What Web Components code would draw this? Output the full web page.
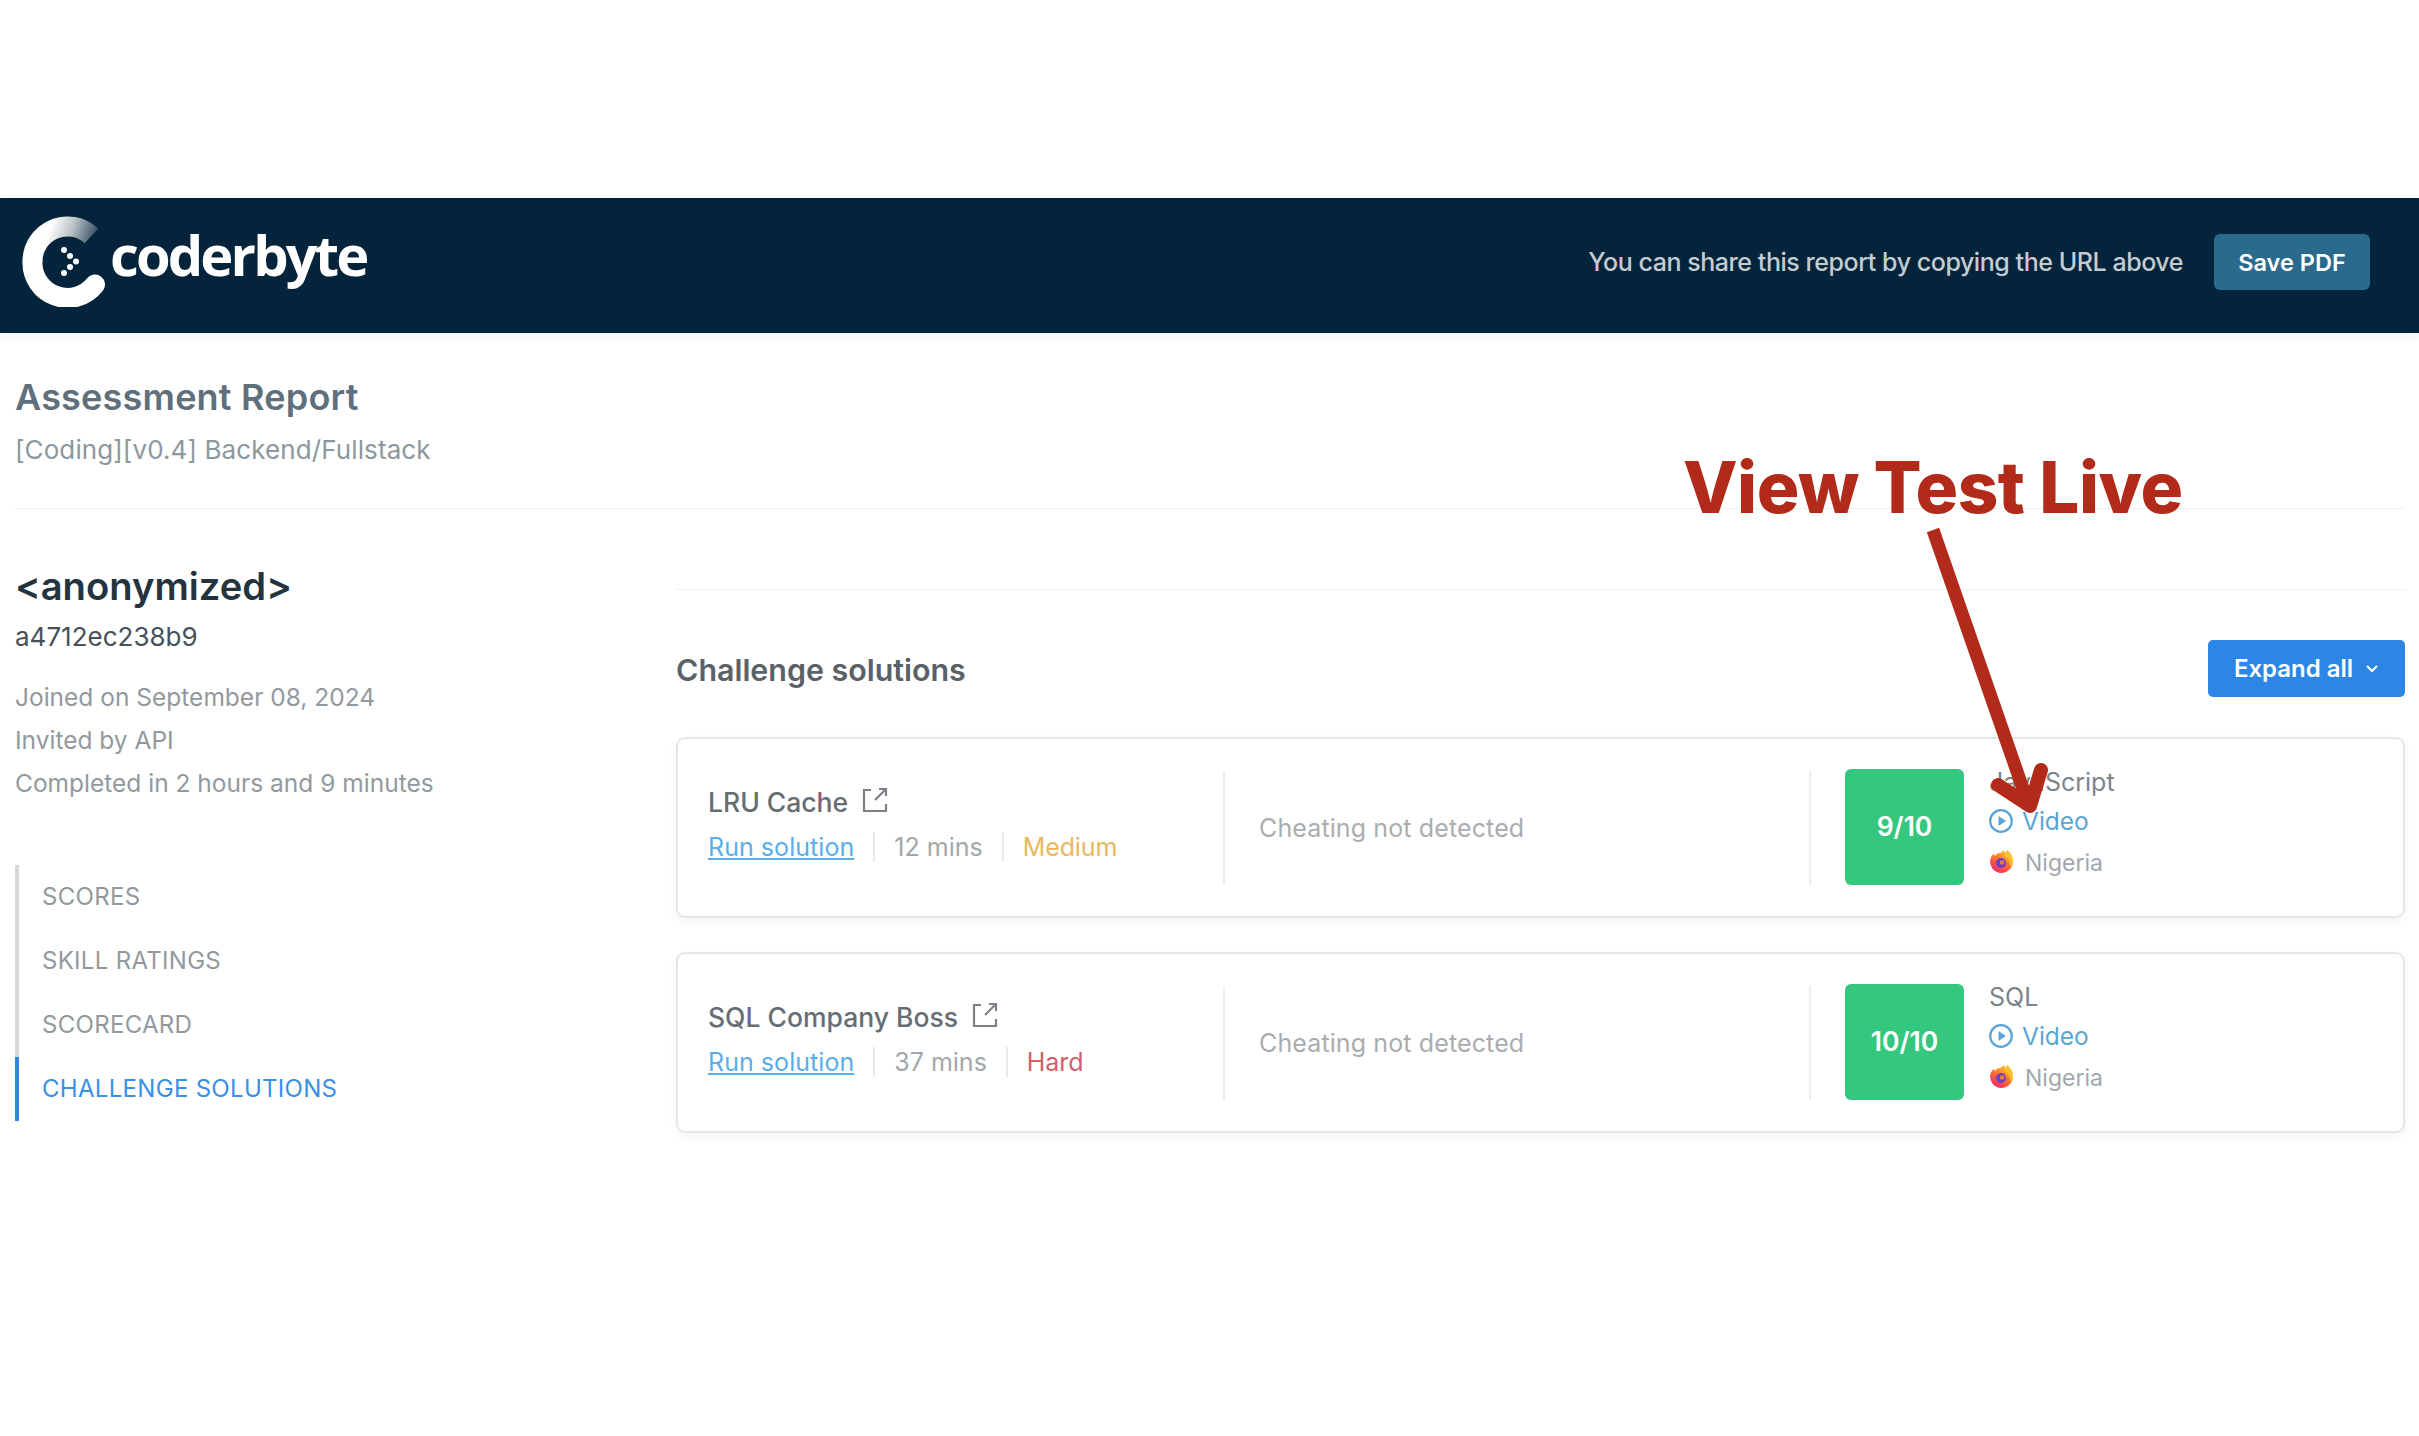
<!DOCTYPE html>
<html>
<head>
<meta charset="utf-8">
<title>Assessment Report</title>
<style>
  html, body { margin: 0; background: #fff; }
  body { font-family: Inter, "Liberation Sans", sans-serif; }
</style>
</head>
<body>
<report-page>
  <report-header slot="header"></report-header>
  <candidate-panel slot="side" name="&lt;anonymized&gt;" uid="a4712ec238b9">
    <div>Joined on September 08, 2024</div>
    <div>Invited by API</div>
    <div>Completed in 2 hours and 9 minutes</div>
  </candidate-panel>
  <section-nav slot="side">
    <nav-item>SCORES</nav-item>
    <nav-item>SKILL RATINGS</nav-item>
    <nav-item>SCORECARD</nav-item>
    <nav-item active>CHALLENGE SOLUTIONS</nav-item>
  </section-nav>
  <challenge-card slot="main" name="LRU Cache" mins="12 mins" level="Medium" score="9/10" lang="JavaScript"></challenge-card>
  <challenge-card slot="main" name="SQL Company Boss" mins="37 mins" level="Hard" score="10/10" lang="SQL"></challenge-card>
</report-page>

<script>
class ReportPage extends HTMLElement {
  constructor() {
    super();
    this.attachShadow({ mode: 'open' });
    this.shadowRoot.innerHTML = `
      <style>
        :host { display: block; position: relative; padding-top: 198px; height: 1238px; overflow: hidden; }
        .head { padding: 42px 14px 0 15px; }
        h1 { margin: 0; font-size: 36px; line-height: 44px; font-weight: 600; color: #5f6f7b; letter-spacing: .2px; }
        .sub { margin-top: 13px; font-size: 26px; line-height: 36px; color: #8d979e; letter-spacing: .1px; }
        hr { border: 0; height: 1px; background: #eef0f1; margin: 0; }
        .head hr { margin-top: 40px; }
        .cols { display: grid; grid-template-columns: 661px 1fr; padding: 0 14px 0 15px; }
        .side { padding-top: 54px; }
        .main hr { margin-top: 80px; }
        .title { display: flex; justify-content: space-between; align-items: center; margin: 50px 0 40px; }
        h2 { margin: 2px 0 0; font-size: 30.4px; font-weight: 600; color: #5a6167; }
        button { display: flex; align-items: center; gap: 12px; width: 197px; height: 57px; justify-content: center; border: 0; border-radius: 5px;
          background: #2b87e3; color: #fff; font: 600 24px Inter, sans-serif; }
        .cards { display: flex; flex-direction: column; gap: 34px; }
        .callout { position: absolute; left: 1683px; top: 438px; margin: 0; font: 800 71px/98px Inter, sans-serif; letter-spacing: -.55px; color: #b22a1a; white-space: nowrap; }
        .arrow { position: absolute; left: 1900px; top: 510px; }
      </style>
      <slot name="header"></slot>
      <div class="head">
        <h1>Assessment Report</h1>
        <div class="sub">[Coding][v0.4] Backend/Fullstack</div>
        <hr>
      </div>
      <div class="cols">
        <div class="side"><slot name="side"></slot></div>
        <div class="main">
          <hr>
          <div class="title">
            <h2>Challenge solutions</h2>
            <button>Expand all
              <svg width="14" height="10" viewBox="0 0 14 10" fill="none" stroke="#fff" stroke-width="2"><path d="M2 2l5 5 5-5"/></svg>
            </button>
          </div>
          <div class="cards"><slot name="main"></slot></div>
        </div>
      </div>
      <p class="callout">View Test Live</p>
      <svg class="arrow" width="170" height="320" viewBox="0 0 170 320" fill="none" stroke="#b22a1a" stroke-linejoin="round">
        <path d="M33 20L128 293" stroke-width="13"/>
        <path d="M98 275L130 296L141 260" stroke-width="14" stroke-linecap="round"/>
      </svg>
    `;
  }
}

class ReportHeader extends HTMLElement {
  constructor() {
    super();
    this.attachShadow({ mode: 'open' });
    this.shadowRoot.innerHTML = `
      <style>
        :host { display: flex; align-items: center; height: 135px; background: #03243a; box-shadow: 0 4px 10px rgba(40,70,90,.06); padding: 0 49px 0 21px; box-sizing: border-box; }
        .logo { display: flex; align-items: center; gap: 5px; margin-top: -6px; }
        .logo svg { margin-top: -4px; }
        .word { font: 700 56px/1 "Open Sans", sans-serif; color: #fff; letter-spacing: -2.85px; margin-top: -18px; }
        .share { margin-left: auto; margin-top: -7px; font-size: 25px; font-weight: 500; color: #c3ccd2; letter-spacing: -.45px; }
        button { margin-left: 31px; width: 156px; height: 56px; border: 0; border-radius: 6px; background: #2a6a8c; color: #fff; font: 600 23.5px Inter, sans-serif; margin-top: -7px; }
      </style>
      <div class="logo">
        <svg width="84" height="92" viewBox="0 0 84 92">
          <defs>
            <linearGradient id="fade" gradientUnits="userSpaceOnUse" x1="30" y1="10" x2="76" y2="26">
              <stop offset="0" stop-color="#fff"/>
              <stop offset=".45" stop-color="#b9c0c4"/>
              <stop offset="1" stop-color="#24435a"/>
            </linearGradient>
          </defs>
          <path d="M70.400 20.900A35 35 0 0 0 11.500 46.500" fill="none" stroke="url(#fade)" stroke-width="20"/>
          <path d="M11.500 46.500A35 35 0 0 0 74 69.500" fill="none" stroke="#fff" stroke-width="20" stroke-linecap="round"/>
          <g fill="#fff">
            <circle cx="43" cy="35" r="3"/><circle cx="49" cy="41" r="3"/><circle cx="55" cy="46.500" r="3"/><circle cx="49" cy="52" r="3"/><circle cx="43" cy="58" r="3"/>
          </g>
        </svg>
        <span class="word">coderbyte</span>
      </div>
      <span class="share">You can share this report by copying the URL above</span>
      <button>Save PDF</button>
    `;
  }
}

class CandidatePanel extends HTMLElement {
  constructor() {
    super();
    this.attachShadow({ mode: 'open' });
    this.shadowRoot.innerHTML = `
      <style>
        :host { display: block; }
        .name { font-size: 38.2px; line-height: 46px; font-weight: 600; color: #24343f; }
        .uid { margin-top: 10px; font-size: 26px; line-height: 36px; color: #465159; }
        .meta { margin-top: 21px; font-size: 24.5px; line-height: 43.2px; color: #92999e; }
      </style>
      <div class="name"></div>
      <div class="uid"></div>
      <div class="meta"><slot></slot></div>
    `;
  }
  connectedCallback() {
    this.shadowRoot.querySelector('.name').textContent = this.getAttribute('name');
    this.shadowRoot.querySelector('.uid').textContent = this.getAttribute('uid');
  }
}

class SectionNav extends HTMLElement {
  constructor() {
    super();
    this.attachShadow({ mode: 'open' });
    this.shadowRoot.innerHTML = `
      <style>
        :host { display: block; margin-top: 59px; border-left: 4px solid #d5d8da; }
      </style>
      <slot></slot>
    `;
  }
}

class NavItem extends HTMLElement {
  constructor() {
    super();
    this.attachShadow({ mode: 'open' });
    this.shadowRoot.innerHTML = `
      <style>
        :host { display: block; height: 64px; line-height: 64px; padding-left: 23px; margin-left: -4px; border-left: 4px solid transparent; font-size: 24px; letter-spacing: .3px; color: #92999e; }
        :host([active]) { border-left-color: #2b87e3; color: #3a8fe6; }
      </style>
      <slot></slot>
    `;
  }
}

class ChallengeCard extends HTMLElement {
  constructor() {
    super();
    this.attachShadow({ mode: 'open' });
    this.shadowRoot.innerHTML = `
      <style>
        :host { display: flex; align-items: center; height: 181px; box-sizing: border-box; border: 2px solid #e4e7e9; border-radius: 9px; box-shadow: 0 4px 10px rgba(60,80,100,.06); padding-left: 30px; background: #fff; }
        .info { width: 517px; height: 114px; box-sizing: border-box; border-right: 2px solid #eceeef; display: flex; flex-direction: column; justify-content: center; padding-bottom: 6px; }
        .name { display: flex; align-items: center; gap: 14px; font-size: 26.5px; line-height: 36px; font-weight: 500; color: #666d73; }
        .name svg { margin-top: -4px; }
        .row { display: flex; align-items: center; margin-top: 9px; font-size: 25px; line-height: 36px; color: #a2a7ab; }
        .row a { color: #5cade8; text-decoration: underline; letter-spacing: .05px; }
        .row span { border-left: 2px solid #e8eaeb; padding-left: 19px; margin-left: 19px; line-height: 30px; }
        .level-Medium { color: #e8b860; letter-spacing: -.1px; }
        .level-Hard { color: #d1606a; letter-spacing: -.1px; }
        .cheat { width: 586px; height: 114px; box-sizing: border-box; border-right: 2px solid #eceeef; padding-left: 34px; line-height: 114px; font-size: 25px; letter-spacing: .12px; color: #a9adb0; }
        .score { margin: -1px 0 0 34px; width: 119px; height: 116px; border-radius: 6px; background: #36c77f; color: #fff; font-size: 26.5px; font-weight: 600; display: flex; align-items: center; justify-content: center; padding-bottom: 2px; box-sizing: border-box; }
        .tech { margin-left: 25px; font-size: 25px; line-height: 39px; padding-bottom: 6px; color: #7d8388; }
        .line { display: flex; align-items: center; gap: 9px; }
        .video { color: #5aa5d6; font-size: 24.5px; }
        .geo { color: #a2a7ab; gap: 11px; font-size: 23px; line-height: 45px; }
      </style>
      <div class="info">
        <div class="name"><span class="title"></span>
          <svg width="26" height="26" viewBox="0 0 26 26" fill="none" stroke="#7b8186" stroke-width="2.2"><path d="M9 3H2v21h22v-7"/><path d="M13 13L24 2M17 2h7v7"/></svg>
        </div>
        <div class="row"><a class="run">Run solution</a><span class="mins"></span><span class="level"></span></div>
      </div>
      <div class="cheat">Cheating not detected</div>
      <div class="score"></div>
      <div class="tech">
        <div class="lang"></div>
        <div class="line video">
          <svg width="24" height="24" viewBox="0 0 24 24" fill="none" stroke="#5aa5d6" stroke-width="2.2" style="margin-top:-2px"><circle cx="12" cy="12" r="10.800"/><path d="M9.500 7l7.500 5-7.500 5z" fill="#5aa5d6" stroke="none"/></svg>
          Video
        </div>
        <div class="line geo">
          <svg width="25" height="25" viewBox="0 0 24 24" style="margin-top:-4px">
            <defs><linearGradient id="fx" x1=".8" y1="0" x2=".2" y2="1"><stop offset="0" stop-color="#ffd23a"/><stop offset=".45" stop-color="#ff7a2a"/><stop offset="1" stop-color="#f0206e"/></linearGradient></defs>
            <path d="M12 23A11 11 0 0 1 1.500 9C2.500 6.500 4 5 5 4.500L5.500 7C7 4.500 9 3.500 11 3.800C13 1.500 15 1 15 1C14.500 2.500 15 3 16 3.500C16.800 2 17.500 1 17.500 1C19.500 3 23 6 23 12A11 11 0 0 1 12 23z" fill="url(#fx)"/>
            <path d="M17.500 1C19.500 3 23 6 23 12C23 14 22.400 16 21.500 17.500C20 12 18 8 14 6C16 5 17 3 17.500 1z" fill="#ffc02e"/>
            <circle cx="11.500" cy="13.500" r="4.800" fill="#6f3bc9"/>
            <circle cx="12.500" cy="13" r="2.200" fill="#f47a3a"/>
          </svg>
          Nigeria
        </div>
      </div>
    `;
  }
  connectedCallback() {
    const root = this.shadowRoot;
    root.querySelector('.title').textContent = this.getAttribute('name');
    root.querySelector('.mins').textContent = this.getAttribute('mins');
    const level = root.querySelector('.level');
    level.textContent = this.getAttribute('level');
    level.classList.add('level-' + this.getAttribute('level'));
    root.querySelector('.score').textContent = this.getAttribute('score');
    root.querySelector('.lang').textContent = this.getAttribute('lang');
  }
}

customElements.define('report-page', ReportPage);
customElements.define('report-header', ReportHeader);
customElements.define('candidate-panel', CandidatePanel);
customElements.define('section-nav', SectionNav);
customElements.define('nav-item', NavItem);
customElements.define('challenge-card', ChallengeCard);
</script>
</body>
</html>
